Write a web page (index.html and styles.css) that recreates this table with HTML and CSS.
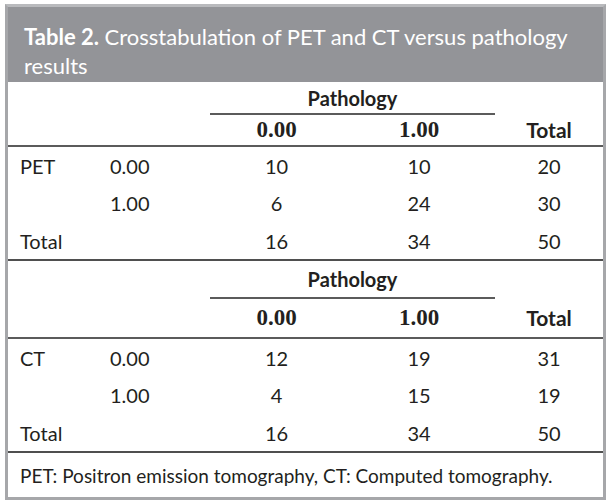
FILE: index.html
```html
<!DOCTYPE html>
<html>
<head>
<meta charset="utf-8">
<link rel="stylesheet" href="styles.css">
</head>
<body>
<div class="frame">
  <div class="caption"><b>Table 2.</b> <span>Crosstabulation of PET and CT versus pathology</span> <span>results</span></div>
  <table class="ct">
    <colgroup>
      <col class="c1"><col class="c2"><col class="c3"><col class="c4"><col class="c5">
    </colgroup>
    <tbody class="block">
      <tr class="prow"><td></td><td></td><th colspan="2" class="path">Pathology</th><td></td></tr>
      <tr class="hrow"><td></td><td></td><th class="num">0.00</th><th class="num">1.00</th><th class="tot">Total</th></tr>
      <tr class="drow"><td class="lab">PET</td><td class="sub">0.00</td><td class="v">10</td><td class="v">10</td><td class="v">20</td></tr>
      <tr class="drow"><td class="lab"></td><td class="sub">1.00</td><td class="v">6</td><td class="v">24</td><td class="v">30</td></tr>
      <tr class="drow last"><td class="lab">Total</td><td class="sub"></td><td class="v">16</td><td class="v">34</td><td class="v">50</td></tr>
    </tbody>
    <tbody class="block b2">
      <tr class="prow"><td></td><td></td><th colspan="2" class="path">Pathology</th><td></td></tr>
      <tr class="hrow"><td></td><td></td><th class="num">0.00</th><th class="num">1.00</th><th class="tot">Total</th></tr>
      <tr class="drow"><td class="lab">CT</td><td class="sub">0.00</td><td class="v">12</td><td class="v">19</td><td class="v">31</td></tr>
      <tr class="drow"><td class="lab"></td><td class="sub">1.00</td><td class="v">4</td><td class="v">15</td><td class="v">19</td></tr>
      <tr class="drow last"><td class="lab">Total</td><td class="sub"></td><td class="v">16</td><td class="v">34</td><td class="v">50</td></tr>
    </tbody>
  </table>
  <div class="foot">PET: Positron emission tomography, CT: Computed tomography.</div>
</div>
</body>
</html>
```
FILE: styles.css
```css
html, body {
  margin: 0;
  padding: 0;
  background: #ffffff;
}
body {
  font-family: "Lato", "Open Sans", sans-serif;
  color: #231f20;
}
.frame {
  box-sizing: border-box;
  margin: 4px 0 0 5px;
  width: 601px;
  height: 496px;
  border: 3px solid #a6a7aa;
  border-top-color: #b9babd;
  display: flex;
  flex-direction: column;
}
.caption {
  background: #939498;
  color: #ffffff;
  font-size: 22px;
  line-height: 29px;
  padding: 15px 20px 0 16px;
  height: 75px;
  box-sizing: border-box;
}
.caption b {
  font-weight: 700;
}
.ct {
  border-collapse: collapse;
  width: 595px;
  table-layout: fixed;
  font-size: 20px;
}
.c1 { width: 92px; }
.c2 { width: 110px; }
.c3 { width: 133px; }
.c4 { width: 152px; }
.c5 { width: 108px; }
.ct td, .ct th {
  padding: 0;
  vertical-align: middle;
}
.prow { height: 32px; }
.hrow { height: 32px; }
.b2 .prow { height: 38px; }
.b2 .hrow { height: 40px; }
.hrow td, .hrow th {
  border-bottom: 2px solid #5b5b5b;
}
.drow { height: 38px; }
.drow.last td {
  border-bottom: 2px solid #4f4f4f;
}
.path {
  font-weight: 700;
  text-align: center;
  border-bottom: 2px solid #5b5b5b;
  padding-top: 4px;
}
.num {
  font-family: "Liberation Serif", serif;
  font-weight: 700;
  font-size: 23px;
  text-align: center;
}
.tot {
  font-weight: 700;
  font-size: 21px;
  text-align: center;
}
.lab {
  padding-left: 12px !important;
  text-align: left;
}
.sub {
  padding-left: 10px !important;
  text-align: left;
}
.v {
  text-align: center;
}
.foot {
  flex: 1;
  display: flex;
  align-items: center;
  padding-left: 12px;
  font-size: 19px;
}
```
